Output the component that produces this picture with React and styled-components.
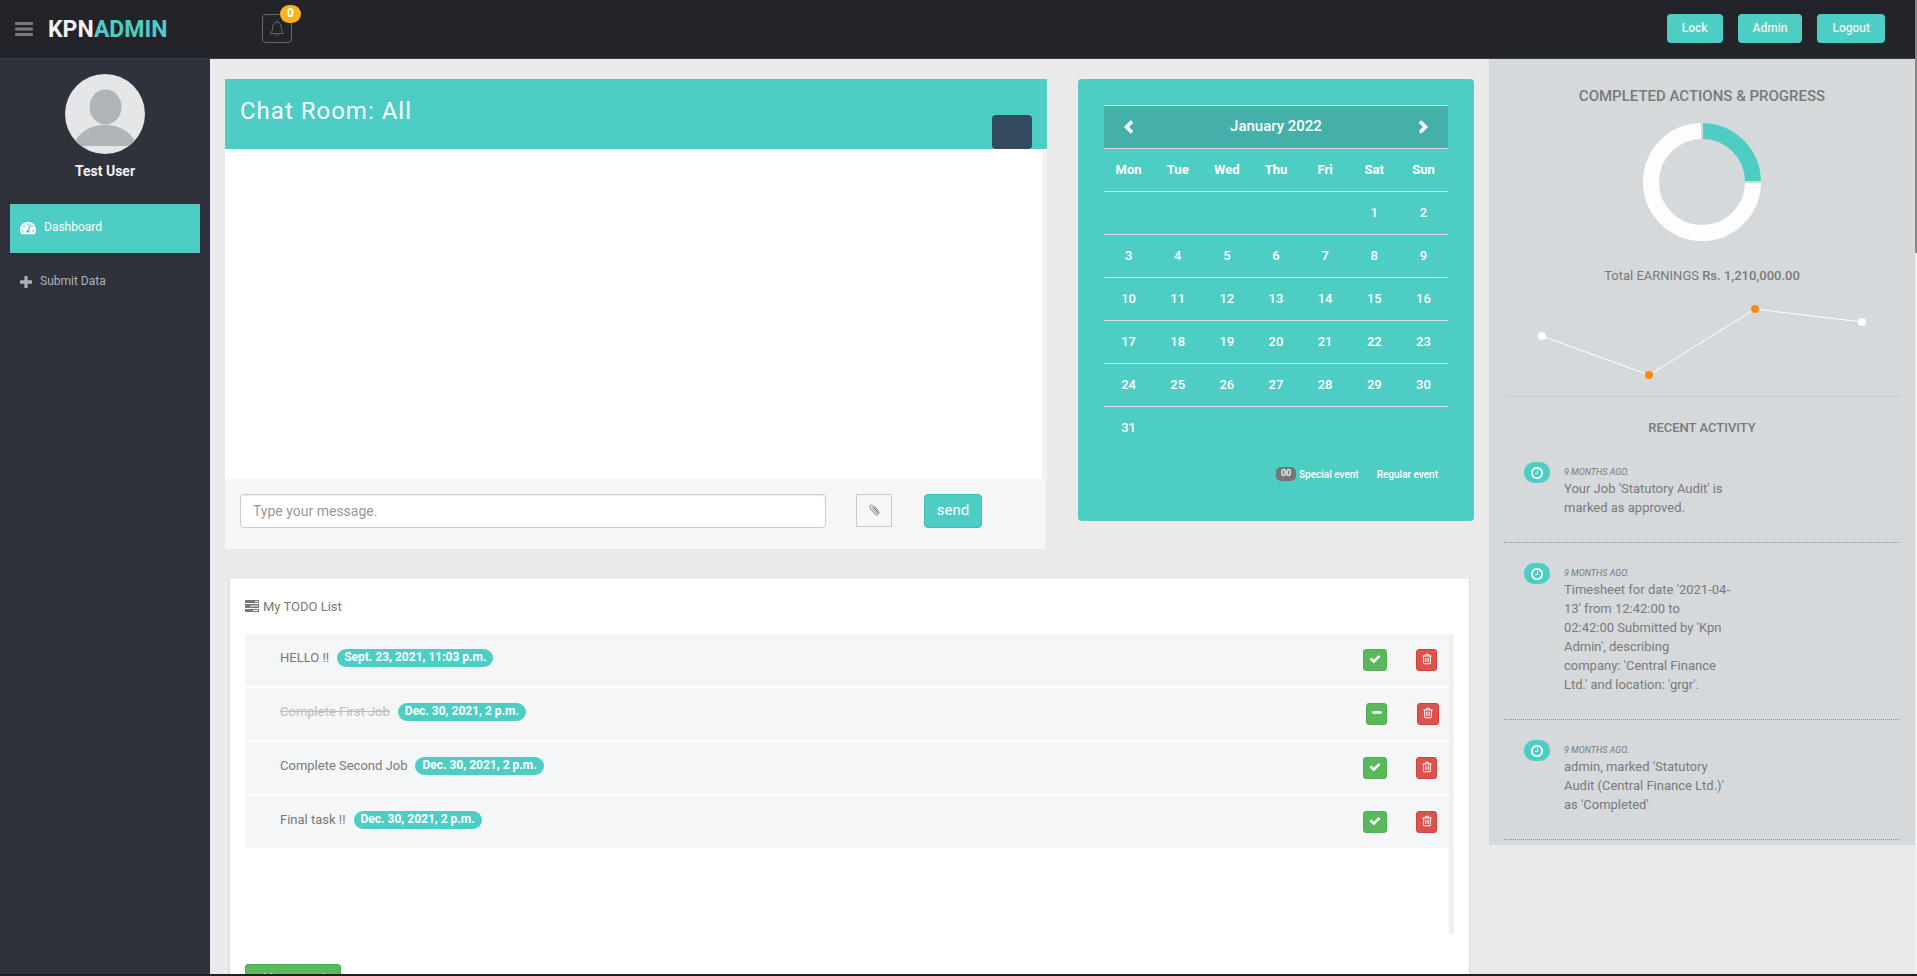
import React from "react";
import styled, { createGlobalStyle, css } from "styled-components";
import { FaTachometerAlt } from "react-icons/fa";

const teal = "#4ecdc4";

const Global = createGlobalStyle`
  *, *::before, *::after { box-sizing: border-box; }
  body {
    margin: 0;
    background: #eaeaea;
    color: #797979;
    font-family: Roboto, "Liberation Sans", sans-serif;
    font-size: 13px;
    line-height: 19px;
  }
  button, input { font-family: inherit; margin: 0; }
  h1, h2, h3, h4, p, ul { margin: 0; padding: 0; font-weight: 400; }
  ul { list-style: none; }
  a { color: inherit; text-decoration: none; }
`;

const Page = styled.div`
  display: flex;
  height: 100vh;
  overflow: hidden;
  border-bottom: 2px solid #202124;
`;

const PageBody = styled.div`
  display: flex;
  flex-direction: column;
  flex: 1;
  min-width: 0;
`;

const Columns = styled.div`
  display: flex;
  flex: 1;
  min-height: 0;
`;

const PageTrack = styled.div`
  width: 2px;
  background: #f1f1f1;
`;

const PageThumb = styled.div`
  height: 26%;
  background: #888;
`;

const Header = styled.header`
  display: flex;
  align-items: center;
  flex: none;
  height: 59px;
  padding: 0 30px 1px 15px;
  background: #22242a;
  border-bottom: 1px solid #393d42;
`;

const MenuButton = styled.button`
  display: flex;
  padding: 0;
  border: 0;
  background: none;
  color: #797979;
`;

const Logo = styled.a`
  margin-left: 15px;
  padding-top: 2px;
  width: 214px;
  font-size: 23px;
  line-height: 28px;
  font-weight: 700;
  color: #f2f2f2;
  span { color: ${teal}; }
`;

const BellButton = styled.button`
  position: relative;
  display: flex;
  align-items: center;
  justify-content: center;
  width: 30px;
  height: 29px;
  padding: 0;
  border: 1px solid #666;
  border-radius: 4px;
  background: none;
  color: #666;
`;

const BellBadge = styled.span`
  position: absolute;
  top: -10px;
  right: -10px;
  width: 21px;
  height: 18px;
  border-radius: 9px;
  background: #fcb322;
  color: #fff;
  font-size: 12px;
  line-height: 17px;
  font-weight: 700;
  text-align: center;
`;

const HeaderActions = styled.nav`
  display: flex;
  gap: 15px;
  margin-left: auto;
`;

const HeaderLink = styled.a`
  height: 29px;
  padding: 5px 15px;
  border-radius: 4px;
  background: ${teal};
  color: #f2f2f2;
  font-size: 12px;
  line-height: 18px;
  font-weight: 500;
`;

const Sidebar = styled.aside`
  display: flex;
  flex-direction: column;
  align-items: center;
  flex: none;
  width: 210px;
  padding: 15px 10px;
  background: #2f323a;
`;

const UserName = styled.h4`
  margin: 8px 0 23px;
  color: #f2f2f2;
  font-size: 14px;
  line-height: 19px;
  font-weight: 700;
`;

const SideNav = styled.nav`
  display: flex;
  flex-direction: column;
  gap: 5px;
  align-self: stretch;
`;

const SideLink = styled.a`
  display: flex;
  align-items: center;
  gap: 8px;
  height: 49px;
  padding: 0 10px 2px;
  font-size: 12px;
  color: #aeb2b7;
  ${(p) => p.$active && css`
    background: ${teal};
    color: #fff;
  `}
`;

const Main = styled.main`
  flex: 1;
  min-width: 0;
  padding: 20px 15px 0;
`;

const TopRow = styled.div`
  display: flex;
  align-items: flex-start;
  gap: 31px;
`;

const Chat = styled.section`
  flex: 1;
  min-width: 0;
`;

const ChatHeader = styled.div`
  display: flex;
  justify-content: space-between;
  height: 70px;
  padding: 18px 15px 0;
  background: ${teal};
`;

const ChatTitle = styled.h2`
  color: #fff;
  font-size: 24px;
  line-height: 28px;
  letter-spacing: 1px;
`;

const ChatToggle = styled.button`
  align-self: flex-end;
  width: 40px;
  height: 34px;
  padding: 0;
  border: 0;
  border-radius: 4px;
  background: #34495e;
`;

const ChatBody = styled.div`
  height: 330px;
  background: #fff;
  border-right: 5px solid #f1f1f1;
`;

const ChatForm = styled.form`
  display: flex;
  align-items: flex-start;
  height: 70px;
  padding: 15px 64px 0 15px;
  background: #f6f6f6;
  border-right: 1px solid #e6e6ee;
`;

const MessageInput = styled.input`
  flex: 1;
  min-width: 0;
  height: 34px;
  padding: 6px 12px;
  border: 1px solid #ccc;
  border-radius: 4px;
  background: #fff;
  box-shadow: inset 0 1px 1px rgba(0, 0, 0, 0.075);
  color: #555;
  font-size: 14px;
  &::placeholder { color: #999; opacity: 1; }
`;

const AttachButton = styled.button`
  display: flex;
  align-items: center;
  justify-content: center;
  width: 36px;
  height: 33px;
  margin: 0 32px 0 30px;
  padding: 0 0 2px;
  border: 1px solid #ccc;
  background: none;
  color: #797979;
`;

const SendButton = styled.button`
  width: 58px;
  height: 34px;
  padding: 0 0 2px;
  border: 1px solid #43b8b0;
  border-radius: 4px;
  background: ${teal};
  color: #fff;
  font-size: 15px;
`;

const CalendarCard = styled.section`
  width: 396px;
  height: 442px;
  padding: 26px;
  border-radius: 4px;
  background: ${teal};
  color: #fff;
`;

const CalendarTable = styled.table`
  width: 100%;
  table-layout: fixed;
  border-collapse: collapse;
  text-align: center;
  th, td {
    height: 43px;
    padding: 0 0 2px;
    border-top: 1px solid #ddd;
    font-size: 13px;
    font-weight: 500;
  }
  thead th { font-weight: 700; }
`;

const MonthRow = styled.tr`
  background: #45b0aa;
  && th { font-size: 15px; font-weight: 500; }
`;

const MonthButton = styled.button`
  padding: 0;
  border: 0;
  background: none;
  color: #fff;
  vertical-align: middle;
  svg { display: block; }
`;

const Legend = styled.div`
  display: flex;
  align-items: center;
  justify-content: flex-end;
  gap: 3px;
  margin: 15px 10px 0 0;
  font-size: 10px;
  font-weight: 500;
`;

const LegendBadge = styled.span`
  width: 20px;
  height: 14px;
  border-radius: 5px;
  background: #777;
  font-size: 9px;
  line-height: 13px;
  text-align: center;
`;

const LegendLast = styled.span`
  margin-left: 15px;
`;

const TodoCard = styled.section`
  margin: 30px 5px 0;
  height: 460px;
  padding: 15px;
  background: #fff;
  box-shadow: 0 2px 2px #bbb;
`;

const TodoTitle = styled.h3`
  display: flex;
  align-items: center;
  gap: 4px;
  height: 24px;
  margin-bottom: 16px;
  font-size: 13px;
`;

const TodoList = styled.ul`
  display: flex;
  flex-direction: column;
  gap: 2px;
  height: 300px;
  border-right: 5px solid #f1f1f1;
`;

const TodoItem = styled.li`
  display: flex;
  align-items: flex-start;
  height: 52px;
  padding: 15px ${(p) => (p.$done ? 10 : 12)}px 0 35px;
  background: ${(p) => (p.$done ? "#f6f6f6" : "#f5f6f8")};
`;

const TodoText = styled.span`
  margin-right: 8px;
  line-height: 18px;
  ${(p) => p.$done && css`
    color: #bbb;
    text-decoration: line-through;
  `}
`;

const DateBadge = styled.span`
  height: 18px;
  padding: 0 7px;
  border-radius: 9px;
  background: ${teal};
  color: #fff;
  font-size: 12px;
  line-height: 17px;
  font-weight: 700;
`;

const TodoButtons = styled.span`
  display: flex;
  gap: ${(p) => (p.$done ? 30 : 29)}px;
  margin-left: auto;
`;

const SmallButton = styled.button`
  display: flex;
  justify-content: center;
  align-items: center;
  width: ${(p) => p.$w}px;
  height: 22px;
  padding: 0 0 2px;
  border: 1px solid ${(p) => (p.$danger ? "#d43f3a" : "#4cae4c")};
  border-radius: 3px;
  background: ${(p) => (p.$danger ? "#d9534f" : "#5cb85c")};
  color: #fff;
`;

const AddButton = styled.button`
  width: 96px;
  height: 30px;
  margin-top: 30px;
  padding: 0;
  border: 1px solid #4cae4c;
  border-radius: 3px;
  background: #5cb85c;
  color: #fff;
  font-size: 12px;
`;

const SidePanel = styled.aside`
  align-self: flex-start;
  width: 426px;
  padding: 27px 15px 5px;
  background: #d5d9dc;
`;

const PanelTitle = styled.h3`
  font-size: 15px;
  line-height: 20px;
  font-weight: 500;
  text-align: center;
`;

const DonutBox = styled.div`
  display: flex;
  justify-content: center;
  margin: 16px 0 12px;
`;

const Earnings = styled.div`
  height: 142px;
  padding-top: 12px;
  border-radius: 4px;
  box-shadow: 0 1px 1px rgba(0, 0, 0, 0.06);
  text-align: center;
  b { font-weight: 500; }
  svg { display: block; width: 100%; height: 90px; margin-top: 11px; }
`;

const ActivityTitle = styled.h3`
  margin: 22px 0 14px;
  font-size: 13px;
  line-height: 20px;
  font-weight: 500;
  text-align: center;
`;

const Activity = styled.li`
  display: flex;
  gap: 14px;
  padding: 10px 20px 25px;
  border-bottom: 1px dotted #8d9296;
  & + & { padding-top: 20px; }
`;

const ClockPill = styled.span`
  display: flex;
  align-items: center;
  justify-content: center;
  flex: none;
  width: 26px;
  height: 21px;
  border-radius: 10px;
  background: ${teal};
  color: #fff;
`;

const ActivityText = styled.div`
  white-space: pre-line;
`;

const When = styled.p`
  padding-top: 3px;
  font-size: 9px;
  line-height: 14px;
  font-style: italic;
`;

const Svg = ({ size = 12, box = "0 0 1792 1792", d }) => (
  <svg width={size} height={size} viewBox={box} fill="currentColor" aria-hidden="true">
    <path d={d} />
  </svg>
);

const icons = {
  trash: "M704 736v576q0 14-9 23t-23 9h-64q-14 0-23-9t-9-23v-576q0-14 9-23t23-9h64q14 0 23 9t9 23zm256 0v576q0 14-9 23t-23 9h-64q-14 0-23-9t-9-23v-576q0-14 9-23t23-9h64q14 0 23 9t9 23zm256 0v576q0 14-9 23t-23 9h-64q-14 0-23-9t-9-23v-576q0-14 9-23t23-9h64q14 0 23 9t9 23zm128 724v-948h-896v948q0 22 7 40.5t14.5 27 10.5 8.5h832q3 0 10.5-8.5t14.5-27 7-40.5zm-672-1076h448l-48-117q-7-9-17-11h-317q-10 2-17 11zm928 32v64q0 14-9 23t-23 9h-96v948q0 83-47 143.5t-113 60.5h-832q-66 0-113-58.5t-47-141.5v-952h-96q-14 0-23-9t-9-23v-64q0-14 9-23t23-9h309l70-167q15-37 54-63t79-26h320q40 0 79 26t54 63l70 167h309q14 0 23 9t9 23z",
  check: "M1671 566q0 40-28 68l-724 724-136 136q-28 28-68 28t-68-28l-136-136-362-362q-28-28-28-68t28-68l136-136q28-28 68-28t68 28l294 295 656-657q28-28 68-28t68 28l136 136q28 28 28 68z",
  minus: "M1600 736v192q0 40-28 68t-68 28h-1216q-40 0-68-28t-28-68v-192q0-40 28-68t68-28h1216q40 0 68 28t28 68z",
  plus: "M1600 736v192q0 40-28 68t-68 28h-416v416q0 40-28 68t-68 28h-192q-40 0-68-28t-28-68v-416h-416q-40 0-68-28t-28-68v-192q0-40 28-68t68-28h416v-416q0-40 28-68t68-28h192q40 0 68 28t28 68v416h416q40 0 68 28t28 68z",
  clock: "M1024 544v448q0 14-9 23t-23 9h-320q-14 0-23-9t-9-23v-64q0-14 9-23t23-9h224v-352q0-14 9-23t23-9h64q14 0 23 9t9 23zm416 352q0-148-73-273t-198-198-273-73-273 73-198 198-73 273 73 273 198 198 273 73 273-73 198-198 73-273zm224 0q0 209-103 385.5t-279.5 279.5-385.5 103-385.5-103-279.5-279.5-103-385.5 103-385.5 279.5-279.5 385.5-103 385.5 103 279.5 279.5 103 385.5z",
};

const Chevron = ({ right }) => (
  <svg width="10" height="14" viewBox="0 0 10 14" fill="none" stroke="currentColor" strokeWidth="3.6" aria-hidden="true">
    <path d={right ? "M2 1.5 7.5 7 2 12.5" : "M8 1.5 2.5 7 8 12.5"} />
  </svg>
);

const Avatar = () => (
  <svg width="80" height="80" viewBox="0 0 80 80" role="img" aria-label="Test User">
    <defs>
      <clipPath id="avatarClip"><circle cx="40" cy="40" r="40" /></clipPath>
    </defs>
    <g clipPath="url(#avatarClip)">
      <rect width="80" height="80" fill="#e4e6e8" />
      <ellipse cx="40.500" cy="33" rx="16" ry="17.500" fill="#aeb4b8" />
      <path d="M9 72C12 58 26 51 40 51s28 7 31 21z" fill="#aeb4b8" />
    </g>
  </svg>
);

const weekDays = ["Mon", "Tue", "Wed", "Thu", "Fri", "Sat", "Sun"];
const weeks = [0, 1, 2, 3, 4, 5].map((w) =>
  weekDays.map((_, d) => {
    const n = w * 7 + d - 4;
    return n > 0 && n < 32 ? n : "";
  })
);

const todos = [
  { text: "HELLO !!", date: "Sept. 23, 2021, 11:03 p.m." },
  { text: "Complete First Job", date: "Dec. 30, 2021, 2 p.m.", done: true },
  { text: "Complete Second Job", date: "Dec. 30, 2021, 2 p.m." },
  { text: "Final task !!", date: "Dec. 30, 2021, 2 p.m." },
];

const activities = [
  "Your Job 'Statutory Audit' is\nmarked as approved.",
  "Timesheet for date '2021-04-\n13' from 12:42:00 to\n02:42:00 Submitted by 'Kpn\nAdmin', describing\ncompany: 'Central Finance\nLtd.' and location: 'grgr'.",
  "admin, marked 'Statutory\nAudit (Central Finance Ltd.)'\nas 'Completed'",
];

export default function App() {
  return (
    <Page>
      <Global />
      <PageBody>
        <Header>
          <MenuButton aria-label="Toggle menu">
            <svg width="18" height="14" viewBox="0 0 18 14" fill="currentColor" aria-hidden="true">
              <rect width="18" height="3" rx="1" />
              <rect y="5.500" width="18" height="3" rx="1" />
              <rect y="11" width="18" height="3" rx="1" />
            </svg>
          </MenuButton>
          <Logo href="#">KPN<span>ADMIN</span></Logo>
          <BellButton aria-label="Notifications">
            <svg width="16" height="17" viewBox="0 0 16 17" fill="none" stroke="currentColor" aria-hidden="true">
              <path d="M8 .5v1.500M1 13.500c2-1.500 2.800-3.500 2.800-6.500C3.800 4 5.500 2.200 8 2.200S12.200 4 12.200 7c0 3 .8 5 2.800 6.500z" />
              <path d="M6.300 14c.2 2.200 3.200 2.200 3.400 0" />
            </svg>
            <BellBadge>0</BellBadge>
          </BellButton>
          <HeaderActions>
            <HeaderLink href="#">Lock</HeaderLink>
            <HeaderLink href="#">Admin</HeaderLink>
            <HeaderLink href="#">Logout</HeaderLink>
          </HeaderActions>
        </Header>
        <Columns>
          <Sidebar>
            <Avatar />
            <UserName>Test User</UserName>
            <SideNav>
              <SideLink href="#" $active><FaTachometerAlt size={16} />Dashboard</SideLink>
              <SideLink href="#"><Svg box="192 128 1408 1408" d={icons.plus} />Submit Data</SideLink>
            </SideNav>
          </Sidebar>
          <Main>
            <TopRow>
              <Chat>
                <ChatHeader>
                  <ChatTitle>Chat Room: All</ChatTitle>
                  <ChatToggle aria-label="Chat rooms" />
                </ChatHeader>
                <ChatBody />
                <ChatForm onSubmit={(e) => e.preventDefault()}>
                  <MessageInput aria-label="Message" placeholder="Type your message." />
                  <AttachButton type="button" aria-label="Attach a file">
                    <svg width="12" height="12" viewBox="0 0 12 12" fill="none" stroke="currentColor" aria-hidden="true">
                      <path d="M4 3.500 8.300 8.800c.7.900 1.900-.1 1.200-1L4.900 2C3.300.1.600 2.100 2.200 4.200l4.600 5.700c1.900 2.300 5.200.2 3.600-2.600L6.500 2.500" />
                    </svg>
                  </AttachButton>
                  <SendButton>send</SendButton>
                </ChatForm>
              </Chat>
              <CalendarCard>
                <CalendarTable>
                  <thead>
                    <MonthRow>
                      <th><MonthButton aria-label="Previous month"><Chevron /></MonthButton></th>
                      <th colSpan={5}>January 2022</th>
                      <th><MonthButton aria-label="Next month"><Chevron right /></MonthButton></th>
                    </MonthRow>
                    <tr>{weekDays.map((d) => <th key={d}>{d}</th>)}</tr>
                  </thead>
                  <tbody>
                    {weeks.map((week, i) => (
                      <tr key={i}>{week.map((n, j) => <td key={j}>{n}</td>)}</tr>
                    ))}
                  </tbody>
                </CalendarTable>
                <Legend>
                  <LegendBadge>00</LegendBadge>
                  <span>Special event</span>
                  <LegendLast>Regular event</LegendLast>
                </Legend>
              </CalendarCard>
            </TopRow>
            <TodoCard>
              <TodoTitle>
                <svg width="14" height="12" viewBox="0 0 14 12" fill="currentColor" fillRule="evenodd" aria-hidden="true">
                  <path d="M0 0h14v3H0zM10 1v1h3V1zM0 4h14v4H0zM5 5.500v1h8v-1zM0 9h14v3H0zM8 10v1h5v-1z" />
                </svg>
                My TODO List
              </TodoTitle>
              <TodoList>
                {todos.map((t) => (
                  <TodoItem key={t.text} $done={t.done}>
                    <TodoText $done={t.done}>{t.text}</TodoText>
                    <DateBadge>{t.date}</DateBadge>
                    <TodoButtons $done={t.done}>
                      <SmallButton $w={t.done ? 21 : 24} aria-label={t.done ? "Reopen task" : "Complete task"}>
                        <Svg d={t.done ? icons.minus : icons.check} />
                      </SmallButton>
                      <SmallButton $danger $w={t.done ? 22 : 21} aria-label="Delete task">
                        <Svg d={icons.trash} />
                      </SmallButton>
                    </TodoButtons>
                  </TodoItem>
                ))}
              </TodoList>
              <AddButton>Add New Tasks</AddButton>
            </TodoCard>
          </Main>
          <SidePanel>
            <PanelTitle>COMPLETED ACTIONS &amp; PROGRESS</PanelTitle>
            <DonutBox>
              <svg width="120" height="120" viewBox="0 0 120 120" role="img" aria-label="25% completed">
                <circle cx="60" cy="60" r="51" fill="none" stroke="#fdfdfd" strokeWidth="16" />
                <path d="M60 9A51 51 0 0 1 111 60" fill="none" stroke={teal} strokeWidth="16" />
                <path d="M60 0V18M102 60H120" stroke="#d5d9dc" strokeWidth="2" />
              </svg>
            </DonutBox>
            <Earnings>
              Total EARNINGS <b>Rs. 1,210,000.00</b>
              <svg viewBox="0 0 396 90" role="img" aria-label="Earnings trend">
                <path d="M38 40 145 79 251 13 358 26" fill="none" stroke="#fff" />
                <circle cx="38" cy="40" r="4" fill="#fff" />
                <circle cx="145" cy="79" r="4" fill="#ff8c00" />
                <circle cx="251" cy="13" r="4" fill="#ff8c00" />
                <circle cx="358" cy="26" r="4" fill="#fff" />
              </svg>
            </Earnings>
            <ActivityTitle>RECENT ACTIVITY</ActivityTitle>
            <ul>
              {activities.map((text) => (
                <Activity key={text}>
                  <ClockPill><Svg size={14} d={icons.clock} /></ClockPill>
                  <ActivityText>
                    <When>9 MONTHS AGO.</When>
                    <p>{text}</p>
                  </ActivityText>
                </Activity>
              ))}
            </ul>
          </SidePanel>
        </Columns>
      </PageBody>
      <PageTrack><PageThumb /></PageTrack>
    </Page>
  );
}
